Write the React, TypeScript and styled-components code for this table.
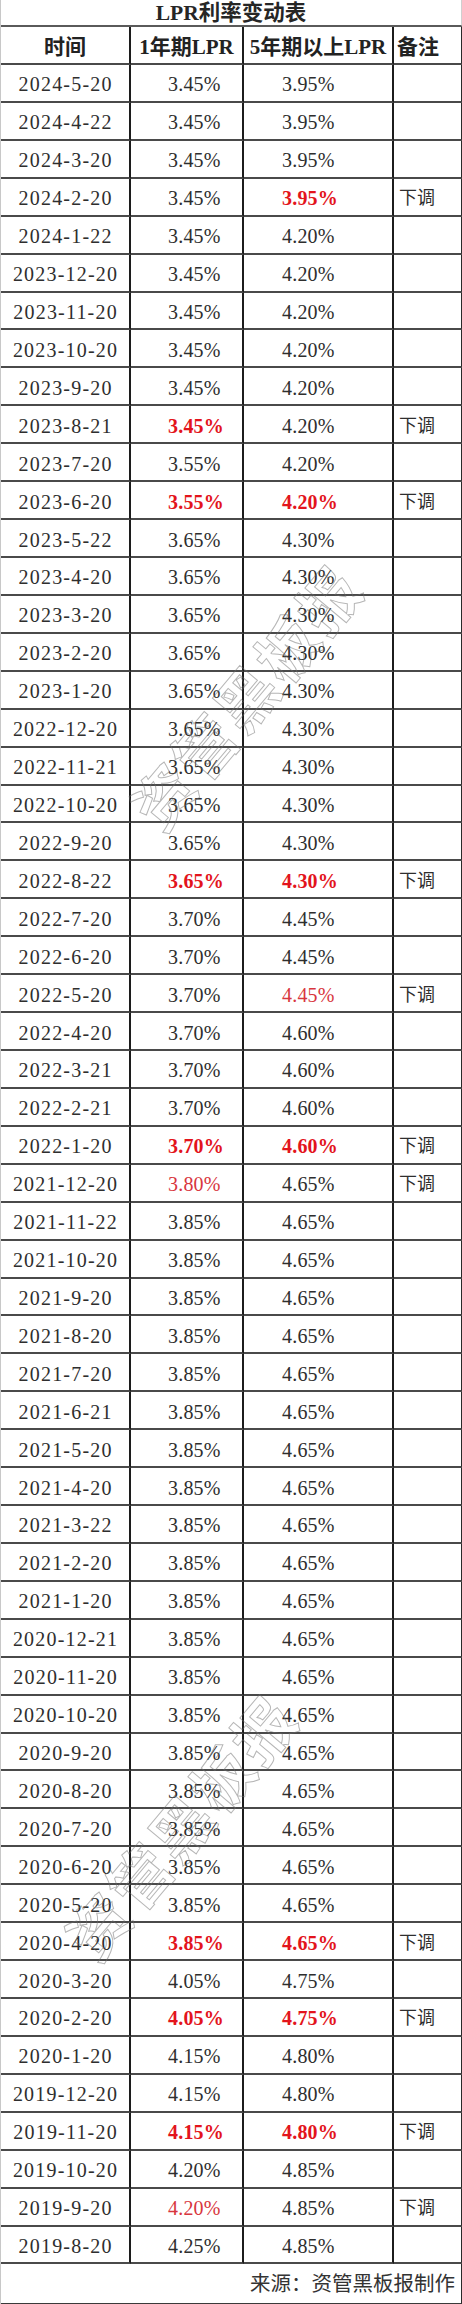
import React from "react";
import styled, { createGlobalStyle, css } from "styled-components";

const GlobalStyle = createGlobalStyle`
  html, body { margin: 0; padding: 0; background: #ffffff; }
  body { font-family: "Liberation Serif", "Noto Sans CJK SC", serif; color: #2a2a2a; }
`;

type Tone = "plain" | "bold" | "light";
type Row = { date: string; one: string; five: string; oneTone?: Tone; fiveTone?: Tone; note?: boolean };

const rows: Row[] = [
  { date: "2024-5-20", one: "3.45%", five: "3.95%" },
  { date: "2024-4-22", one: "3.45%", five: "3.95%" },
  { date: "2024-3-20", one: "3.45%", five: "3.95%" },
  { date: "2024-2-20", one: "3.45%", five: "3.95%", fiveTone: "bold", note: true },
  { date: "2024-1-22", one: "3.45%", five: "4.20%" },
  { date: "2023-12-20", one: "3.45%", five: "4.20%" },
  { date: "2023-11-20", one: "3.45%", five: "4.20%" },
  { date: "2023-10-20", one: "3.45%", five: "4.20%" },
  { date: "2023-9-20", one: "3.45%", five: "4.20%" },
  { date: "2023-8-21", one: "3.45%", five: "4.20%", oneTone: "bold", note: true },
  { date: "2023-7-20", one: "3.55%", five: "4.20%" },
  { date: "2023-6-20", one: "3.55%", five: "4.20%", oneTone: "bold", fiveTone: "bold", note: true },
  { date: "2023-5-22", one: "3.65%", five: "4.30%" },
  { date: "2023-4-20", one: "3.65%", five: "4.30%" },
  { date: "2023-3-20", one: "3.65%", five: "4.30%" },
  { date: "2023-2-20", one: "3.65%", five: "4.30%" },
  { date: "2023-1-20", one: "3.65%", five: "4.30%" },
  { date: "2022-12-20", one: "3.65%", five: "4.30%" },
  { date: "2022-11-21", one: "3.65%", five: "4.30%" },
  { date: "2022-10-20", one: "3.65%", five: "4.30%" },
  { date: "2022-9-20", one: "3.65%", five: "4.30%" },
  { date: "2022-8-22", one: "3.65%", five: "4.30%", oneTone: "bold", fiveTone: "bold", note: true },
  { date: "2022-7-20", one: "3.70%", five: "4.45%" },
  { date: "2022-6-20", one: "3.70%", five: "4.45%" },
  { date: "2022-5-20", one: "3.70%", five: "4.45%", fiveTone: "light", note: true },
  { date: "2022-4-20", one: "3.70%", five: "4.60%" },
  { date: "2022-3-21", one: "3.70%", five: "4.60%" },
  { date: "2022-2-21", one: "3.70%", five: "4.60%" },
  { date: "2022-1-20", one: "3.70%", five: "4.60%", oneTone: "bold", fiveTone: "bold", note: true },
  { date: "2021-12-20", one: "3.80%", five: "4.65%", oneTone: "light", note: true },
  { date: "2021-11-22", one: "3.85%", five: "4.65%" },
  { date: "2021-10-20", one: "3.85%", five: "4.65%" },
  { date: "2021-9-20", one: "3.85%", five: "4.65%" },
  { date: "2021-8-20", one: "3.85%", five: "4.65%" },
  { date: "2021-7-20", one: "3.85%", five: "4.65%" },
  { date: "2021-6-21", one: "3.85%", five: "4.65%" },
  { date: "2021-5-20", one: "3.85%", five: "4.65%" },
  { date: "2021-4-20", one: "3.85%", five: "4.65%" },
  { date: "2021-3-22", one: "3.85%", five: "4.65%" },
  { date: "2021-2-20", one: "3.85%", five: "4.65%" },
  { date: "2021-1-20", one: "3.85%", five: "4.65%" },
  { date: "2020-12-21", one: "3.85%", five: "4.65%" },
  { date: "2020-11-20", one: "3.85%", five: "4.65%" },
  { date: "2020-10-20", one: "3.85%", five: "4.65%" },
  { date: "2020-9-20", one: "3.85%", five: "4.65%" },
  { date: "2020-8-20", one: "3.85%", five: "4.65%" },
  { date: "2020-7-20", one: "3.85%", five: "4.65%" },
  { date: "2020-6-20", one: "3.85%", five: "4.65%" },
  { date: "2020-5-20", one: "3.85%", five: "4.65%" },
  { date: "2020-4-20", one: "3.85%", five: "4.65%", oneTone: "bold", fiveTone: "bold", note: true },
  { date: "2020-3-20", one: "4.05%", five: "4.75%" },
  { date: "2020-2-20", one: "4.05%", five: "4.75%", oneTone: "bold", fiveTone: "bold", note: true },
  { date: "2020-1-20", one: "4.15%", five: "4.80%" },
  { date: "2019-12-20", one: "4.15%", five: "4.80%" },
  { date: "2019-11-20", one: "4.15%", five: "4.80%", oneTone: "bold", fiveTone: "bold", note: true },
  { date: "2019-10-20", one: "4.20%", five: "4.85%" },
  { date: "2019-9-20", one: "4.20%", five: "4.85%", oneTone: "light", note: true },
  { date: "2019-8-20", one: "4.25%", five: "4.85%" },
];

const Page = styled.div`
  position: relative;
  width: 462px;
  height: 2304px;
  overflow: hidden;
  background: #fff;
`;

const Table = styled.div`
  display: grid;
  grid-template-columns: 130px 113px 150px 69px;
  grid-template-rows: 27px 38px repeat(58, 37.93px) 1fr;
  height: 2304px;
  box-sizing: border-box;
  border-left: 1px solid #c8c8c8;
`;

const Title = styled.div`
  grid-column: 1 / span 4;
  box-sizing: border-box;
  border-bottom: 2px solid #5a5a5a;
  border-right: 2px solid #cfcfcf;
  display: flex;
  align-items: center;
  justify-content: center;
  padding-top: 3px;
  font-size: 21.5px;
  font-weight: 700;
  color: #262626;
  line-height: 1;
`;

const Cell = styled.div<{ $align?: "center" | "left"; $pad?: number; $last?: boolean }>`
  box-sizing: border-box;
  border-bottom: 2px solid #4a4a4a;
  border-right: 2px solid ${(p) => (p.$last ? "#2a2a2a" : "#1c1c1c")};
  display: flex;
  align-items: center;
  justify-content: ${(p) => (p.$align === "left" ? "flex-start" : "center")};
  padding-left: ${(p) => p.$pad ?? 0}px;
  padding-top: 3px;
  font-size: 20px;
  line-height: 1;
  white-space: nowrap;
  color: #2e2e2e;
`;

const HeadCell = styled(Cell)`
  font-size: 21px;
  font-weight: 700;
  color: #222;
  padding-top: 4px;
`;

const DateText = styled.span`
  letter-spacing: 1.2px;
  margin-right: -1.2px;
`;

const Value = styled.span<{ $tone: Tone }>`
  letter-spacing: 0.2px;
  ${(p) =>
    p.$tone === "bold"
      ? css`
          color: #e3141c;
          font-weight: 700;
        `
      : p.$tone === "light"
      ? css`
          color: #d8363e;
        `
      : css`
          color: #2e2e2e;
        `}
`;

const Note = styled.span`
  font-size: 18px;
  color: #2e2e2e;
`;

const Footer = styled.div`
  grid-column: 1 / span 4;
  box-sizing: border-box;
  border-bottom: 1px solid #3a3a3a;
  border-right: 2px solid #2a2a2a;
  display: flex;
  align-items: center;
  justify-content: flex-end;
  padding-right: 6px;
  padding-top: 2px;
  font-size: 20.5px;
  color: #333;
  line-height: 1;
`;

const Watermark = styled.div<{ $x: number; $y: number }>`
  position: absolute;
  left: ${(p) => p.$x}px;
  top: ${(p) => p.$y}px;
  transform: translate(-50%, -50%) rotate(-50deg);
  font-family: "Noto Sans CJK SC", sans-serif;
  font-size: 60px;
  font-weight: 700;
  letter-spacing: 4px;
  white-space: nowrap;
  color: transparent;
  -webkit-text-stroke: 1px rgba(110, 110, 110, 0.5);
  pointer-events: none;
  line-height: 1;
`;

export default function App() {
  return (
    <Page>
      <GlobalStyle />
      <Table>
        <Title>LPR利率变动表</Title>
        <HeadCell>时间</HeadCell>
        <HeadCell>1年期LPR</HeadCell>
        <HeadCell>5年期以上LPR</HeadCell>
        <HeadCell $align="left" $pad={3} $last>
          备注
        </HeadCell>
        {rows.map((r) => (
          <React.Fragment key={r.date}>
            <Cell>
              <DateText>{r.date}</DateText>
            </Cell>
            <Cell $align="left" $pad={37}>
              <Value $tone={r.oneTone ?? "plain"}>{r.one}</Value>
            </Cell>
            <Cell $align="left" $pad={38}>
              <Value $tone={r.fiveTone ?? "plain"}>{r.five}</Value>
            </Cell>
            <Cell $align="left" $pad={5} $last>
              {r.note ? <Note>下调</Note> : null}
            </Cell>
          </React.Fragment>
        ))}
        <Footer>来源：资管黑板报制作</Footer>
      </Table>
      <Watermark $x={245} $y={695}>资管黑板报</Watermark>
      <Watermark $x={180} $y={1825}>资管黑板报</Watermark>
    </Page>
  );
}
